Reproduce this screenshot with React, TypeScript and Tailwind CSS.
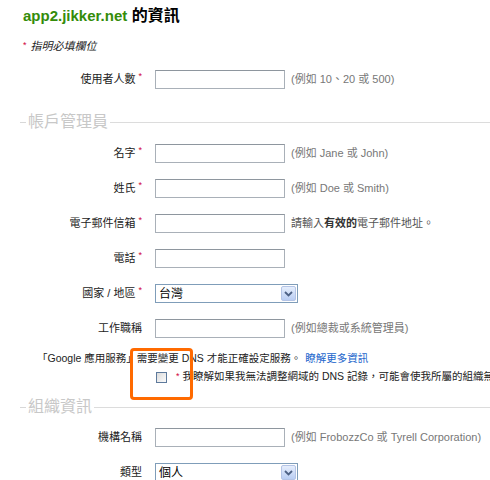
import React from "react";

const font = "font-[family-name:'Liberation_Sans','Noto_Sans_CJK_TC',sans-serif]";

function Star() {
  return <span className="ml-[3px] mt-[10px] self-start text-[9px] leading-none text-[#d0003c]">*</span>;
}

function TextBox() {
  return <div className="h-[19px] w-[130px] shrink-0 border border-[#a9b0b8] border-t-[#8e969e] bg-white" />;
}

function SelectBox({ value }: { value: string }) {
  return (
    <div className="flex h-[19px] w-[143px] shrink-0 items-center border border-[#7f9db9] bg-white">
      <span className="flex-1 pl-[3px] text-[12px] leading-none text-black">{value}</span>
      <div className="mr-[1px] flex h-[15px] w-[15px] items-center justify-center rounded-[2px] border border-[#b4c4e6] bg-gradient-to-b from-[#e6eefc] to-[#b9cdf3]">
        <svg width="9" height="6" viewBox="0 0 9 6">
          <polyline points="1,1 4.5,4.5 8,1" fill="none" stroke="#4d6185" strokeWidth="1.8" />
        </svg>
      </div>
    </div>
  );
}

function Row({
  label,
  required,
  children,
  hint,
}: {
  label: string;
  required?: boolean;
  children: React.ReactNode;
  hint?: React.ReactNode;
}) {
  return (
    <div className="flex h-[35px] items-center">
      <div className="flex h-full w-[142px] shrink-0 items-center justify-end text-[11px] text-[#222]">
        <span>{label}</span>
        {required && <Star />}
      </div>
      <div className="ml-[13px] flex items-center">
        {children}
        {hint && <span className="ml-[6px] whitespace-nowrap text-[11px] text-[#777]">{hint}</span>}
      </div>
    </div>
  );
}

function Legend({ text }: { text: string }) {
  return (
    <div className="flex h-[20px] items-center pl-[20px]">
      <div className="h-px w-[6px] bg-[#d8d8d8]" />
      <span className="px-[2px] text-[16px] leading-none text-[#c8c8c8]">{text}</span>
      <div className="h-px flex-1 bg-[#dcdcdc]" />
    </div>
  );
}

export default function App() {
  return (
    <div className={`relative h-[480px] w-[490px] overflow-hidden bg-white ${font}`}>
      <h1 className="mt-[6px] pl-[23px] text-[16px] font-bold leading-[20px] text-black">
        <span className="text-[15px] text-[#348c0a]">app2.jikker.net</span> 的資訊
      </h1>

      <div className="mt-[12px] flex h-[16px] items-center pl-[23px] text-[11px] italic text-[#222]">
        <span className="mr-[4px] text-[9px] not-italic text-[#d0003c]">*</span>
        指明必填欄位
      </div>

      <div className="mt-[8px]">
        <Row label="使用者人數" required hint="(例如 10、20 或 500)">
          <TextBox />
        </Row>
      </div>

      <div className="mt-[15px]">
        <Legend text="帳戶管理員" />
      </div>

      <div className="mt-[4px]">
        <Row label="名字" required hint="(例如 Jane 或 John)">
          <TextBox />
        </Row>
        <Row label="姓氏" required hint="(例如 Doe 或 Smith)">
          <TextBox />
        </Row>
        <Row
          label="電子郵件信箱"
          required
          hint={
            <span className="text-[11px] text-[#555]">
              請輸入<b className="text-[#333]">有效的</b>電子郵件地址。
            </span>
          }
        >
          <TextBox />
        </Row>
        <Row label="電話" required>
          <TextBox />
        </Row>
        <Row label="國家 / 地區" required>
          <SelectBox value="台灣" />
        </Row>
        <Row label="工作職稱" hint="(例如總裁或系統管理員)">
          <TextBox />
        </Row>
      </div>

      <div className="mt-[5px] flex h-[16px] items-center whitespace-nowrap pl-[37px] text-[10.5px] text-[#222]">
        「Google 應用服務」需要變更 DNS 才能正確設定服務。
        <a className="ml-[4px] text-[#2266cc]">瞭解更多資訊</a>
      </div>

      <div className="mt-[2px] flex h-[16px] items-center whitespace-nowrap pl-[156px] text-[10.5px] text-[#222]">
        <div className="h-[11px] w-[11px] shrink-0 border border-[#5e7a9c] bg-gradient-to-br from-[#dcdcdc] to-[#fbfbfb]" />
        <span className="ml-[9px] mr-[3px] text-[9px] text-[#d0003c]">*</span>
        我瞭解如果我無法調整網域的 DNS 記錄，可能會使我所屬的組織無法使用「Google 應用服務」。
      </div>

      <div className="mt-[12px]">
        <Legend text="組織資訊" />
      </div>

      <div className="mt-[3px]">
        <Row label="機構名稱" hint="(例如 FrobozzCo 或 Tyrell Corporation)">
          <TextBox />
        </Row>
        <Row label="類型">
          <SelectBox value="個人" />
        </Row>
      </div>

      <div className="pointer-events-none absolute left-[130px] top-[348px] h-[52px] w-[63px] rounded-[4px] border-[3px] border-[#ff6a00]" />
    </div>
  );
}
